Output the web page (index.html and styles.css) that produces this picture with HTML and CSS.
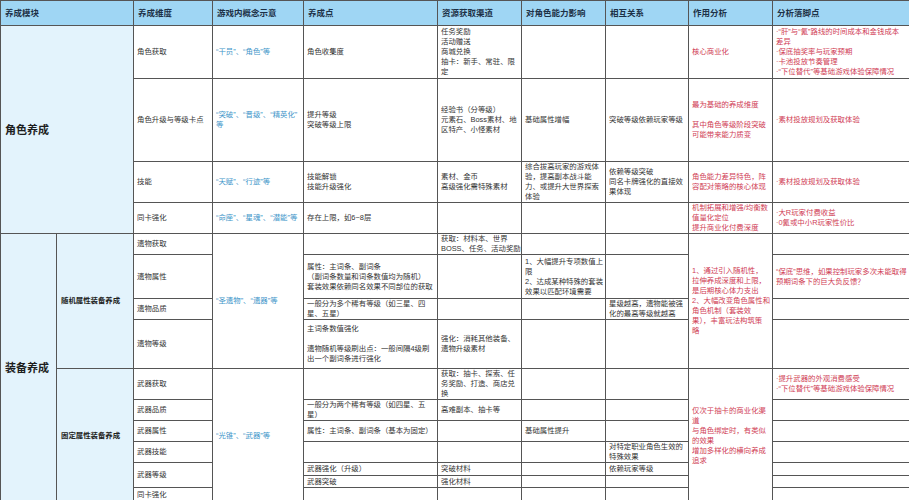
FILE: index.html
```html
<!DOCTYPE html>
<html lang="zh-CN">
<head>
<meta charset="utf-8">
<title>养成模块分析</title>
<link rel="stylesheet" href="styles.css">
</head>
<body>
<table class="grid">
  <colgroup>
    <col class="w56"><col class="w77"><col class="w79"><col class="w91"><col class="w134">
    <col class="w84"><col class="w84"><col class="w83"><col class="w84"><col class="w137">
  </colgroup>
  <thead>
    <tr class="h25">
      <th colspan="2">养成模块</th>
      <th>养成维度</th>
      <th>游戏内概念示意</th>
      <th>养成点</th>
      <th>资源获取渠道</th>
      <th>对角色能力影响</th>
      <th>相互关系</th>
      <th>作用分析</th>
      <th>分析落脚点</th>
    </tr>
  </thead>
  <tbody>
    <tr class="h53">
      <td class="module" colspan="2" rowspan="4">角色养成</td>
      <td>角色获取</td>
      <td class="blue">“干员”、“角色”等</td>
      <td>角色收集度</td>
      <td>任务奖励<br>活动赠送<br>商城兑换<br>抽卡：新手、常驻、限<br>定</td>
      <td></td>
      <td></td>
      <td class="red">核心商业化</td>
      <td class="red">·“肝”与“氪”路线的时间成本和金钱成本<br>差异<br>·保底抽奖率与玩家预期<br>·卡池投放节奏管理<br>·“下位替代”等基础游戏体验保障情况</td>
    </tr>
    <tr class="h83">
      <td>角色升级与等级卡点</td>
      <td class="blue">“突破”、“晋级”、“精英化”<br>等</td>
      <td>提升等级<br>突破等级上限</td>
      <td>经验书（分等级）<br>元素石、Boss素材、地<br>区特产、小怪素材</td>
      <td>基础属性增幅</td>
      <td>突破等级依赖玩家等级</td>
      <td class="red">最为基础的养成维度<br>&nbsp;<br>其中角色等级阶段突破<br>可能带来能力质变</td>
      <td class="red">·素材投放规划及获取体验</td>
    </tr>
    <tr class="h40">
      <td>技能</td>
      <td class="blue">“天赋”、“行迹”等</td>
      <td>技能解锁<br>技能升级强化</td>
      <td>素材、金币<br>高级强化需特殊素材</td>
      <td>综合拔高玩家的游戏体<br>验，提高副本战斗能<br>力、或提升大世界探索<br>体验</td>
      <td>依赖等级突破<br>同名卡牌强化的直接效<br>果体现</td>
      <td class="red">角色能力差异特色，阵<br>容配对策略的核心体现</td>
      <td class="red">·素材投放规划及获取体验</td>
    </tr>
    <tr class="h31">
      <td>同卡强化</td>
      <td class="blue">“命座”、“星魂”、“潜能”等</td>
      <td>存在上限，如6~8层</td>
      <td></td>
      <td></td>
      <td></td>
      <td class="red">机制拓展和增强/均衡数<br>值量化定位<br>提升商业化付费深度</td>
      <td class="red">·大R玩家付费收益<br>·0氪或中小R玩家性价比</td>
    </tr>

    <tr class="h21">
      <td class="module" rowspan="11">装备养成</td>
      <td class="sub" rowspan="4">随机属性装备养成</td>
      <td>遗物获取</td>
      <td class="blue" rowspan="4">“圣遗物”、“遗器”等</td>
      <td></td>
      <td>获取：材料本、世界<br>BOSS、任务、活动奖励</td>
      <td></td>
      <td></td>
      <td class="red" rowspan="4">1、通过引入随机性，<br>拉伸养成深度和上限，<br>是后期核心体力支出<br>2、大幅改变角色属性和<br>角色机制（套装效<br>果），丰富玩法构筑策<br>略</td>
      <td></td>
    </tr>
    <tr class="h44">
      <td>遗物属性</td>
      <td>属性：主词条、副词条<br>（副词条数量和词条数值均为随机）<br>套装效果依赖同名效果不同部位的获取</td>
      <td></td>
      <td>1、大幅提升专项数值上<br>限<br>2、达成某种特殊的套装<br>效果以匹配环境需要</td>
      <td></td>
      <td class="red">“保底”思维，如果控制玩家多次未能取得<br>预期词条下的巨大负反馈？</td>
    </tr>
    <tr class="h21">
      <td>遗物品质</td>
      <td>一般分为多个稀有等级（如三星、四<br>星、五星）</td>
      <td></td>
      <td></td>
      <td>星级越高，遗物能被强<br>化的最高等级就越高</td>
      <td></td>
    </tr>
    <tr class="h49">
      <td>遗物等级</td>
      <td>主词条数值强化<br>&nbsp;<br>遗物随机等级刷出点：一般间隔4级刷<br>出一个副词条进行强化</td>
      <td>强化：消耗其他装备、<br>遗物升级素材</td>
      <td></td>
      <td></td>
      <td></td>
    </tr>

    <tr class="h31">
      <td class="sub" rowspan="7">固定属性装备养成</td>
      <td>武器获取</td>
      <td class="blue" rowspan="7">“光锥”、“武器”等</td>
      <td></td>
      <td>获取：抽卡、探索、任<br>务奖励、打造、商店兑<br>换</td>
      <td></td>
      <td></td>
      <td class="red" rowspan="7">仅次于抽卡的商业化渠<br>道<br>与角色绑定时，有类似<br>的效果<br>增加多样化的横向养成<br>追求</td>
      <td class="red">·提升武器的外观消费感受<br>·“下位替代”等基础游戏体验保障情况</td>
    </tr>
    <tr class="h20">
      <td>武器品质</td>
      <td>一般分为两个稀有等级（如四星、五<br>星）</td>
      <td>高难副本、抽卡等</td>
      <td></td>
      <td></td>
      <td></td>
    </tr>
    <tr class="h21">
      <td>武器属性</td>
      <td>属性：主词条、副词条（基本为固定）</td>
      <td></td>
      <td>基础属性提升</td>
      <td></td>
      <td></td>
    </tr>
    <tr class="h21">
      <td>武器技能</td>
      <td></td>
      <td></td>
      <td></td>
      <td>对特定职业角色生效的<br>特殊效果</td>
      <td></td>
    </tr>
    <tr class="h13">
      <td rowspan="2">武器等级</td>
      <td>武器强化（升级）</td>
      <td>突破材料</td>
      <td></td>
      <td>依赖玩家等级</td>
      <td></td>
    </tr>
    <tr class="h12">
      <td>武器突破</td>
      <td>强化材料</td>
      <td></td>
      <td></td>
      <td></td>
    </tr>
    <tr class="h15">
      <td>同卡强化</td>
      <td></td>
      <td></td>
      <td></td>
      <td></td>
      <td></td>
    </tr>
  </tbody>
</table>
</body>
</html>
```

FILE: styles.css
```css
html, body {
  margin: 0;
  padding: 0;
  background: #ffffff;
}

body {
  font-family: "Liberation Sans", "Noto Sans CJK SC", sans-serif;
  color: #333333;
  overflow: hidden;
}

.grid {
  width: 909px;
  table-layout: fixed;
  border-collapse: collapse;
}

.w56 { width: 56px; }
.w77 { width: 77px; }
.w79 { width: 79px; }
.w91 { width: 91px; }
.w134 { width: 134px; }
.w84 { width: 84px; }
.w83 { width: 83px; }
.w137 { width: 137px; }

.grid th,
.grid td {
  border: 1px solid #555555;
  padding: 0 3px;
  text-align: left;
  vertical-align: middle;
  white-space: nowrap;
  overflow: hidden;
}

.grid th {
  background: #9fd6f4;
  color: #1d3147;
  font-weight: 700;
  font-size: 8.5px;
  line-height: 10px;
  padding-left: 4px;
}

.grid td {
  font-size: 7.4px;
  line-height: 10px;
}

.grid td.module {
  background: #e3f3fc;
  font-size: 11px;
  font-weight: 700;
  color: #1e1e1e;
  padding-left: 4px;
}

.grid td.sub {
  background: #e3f3fc;
  font-weight: 700;
  color: #222222;
  padding-left: 4px;
}

.blue { color: #3e95c9; }
.red { color: #d03d55; }

.h25 { height: 25px; }
.h53 { height: 53px; }
.h83 { height: 83px; }
.h40 { height: 40px; }
.h31 { height: 31px; }
.h21 { height: 21px; }
.h44 { height: 44px; }
.h49 { height: 49px; }
.h20 { height: 20px; }
.h13 { height: 13px; }
.h12 { height: 12px; }
.h15 { height: 15px; }
```
